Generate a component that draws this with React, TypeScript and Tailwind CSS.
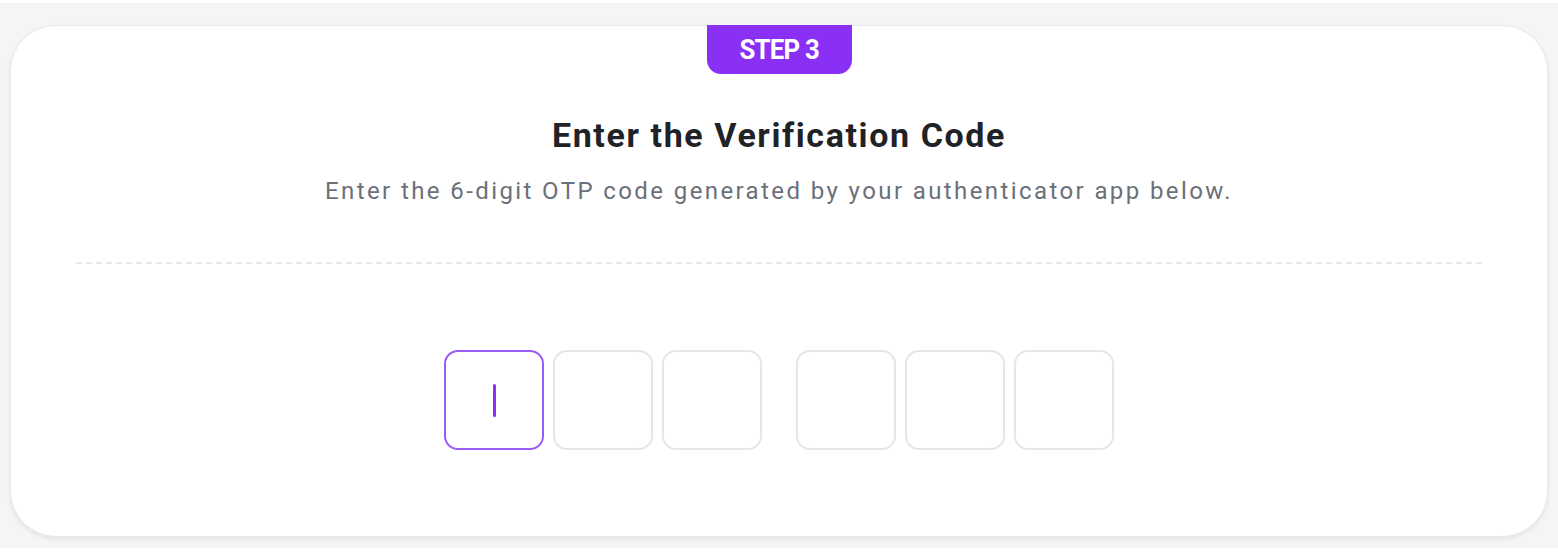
import React from "react";

export default function App() {
  const box = "w-[100px] h-[100px] rounded-[14px] border-2 border-[#e6e6e8] bg-white";
  return (
    <div className="w-[1558px] h-[556px] bg-white pt-[3px]" style={{ fontFamily: "Roboto, 'Liberation Sans', sans-serif" }}>
      <div className="h-[545px] bg-[#f4f5f7] pt-[22px] px-[10px]">
        <div className="h-[512px] rounded-[46px] bg-white border border-[#e9eaec] shadow-[0_2px_4px_rgba(0,0,0,0.08)] flex flex-col items-center">
          <div className="w-[145px] h-[49px] -mt-px bg-[#8a2ff4] rounded-b-[14px] flex items-center justify-center">
            <span className="text-white text-[28px] font-bold tracking-[-0.8px] leading-none scale-x-[0.92]">STEP 3</span>
          </div>
          <h1 className="mt-[41px] text-[34px] leading-[40px] font-bold tracking-[1.6px] text-[#1f2326]">Enter the Verification Code</h1>
          <p className="mt-[21px] text-[24px] leading-[30px] tracking-[2.4px] text-[#6b7079]">Enter the 6-digit OTP code generated by your authenticator app below.</p>
          <div className="w-full px-[65px] mt-[56px]">
            <div className="border-t-2 border-dashed border-[#e8e8ea]" />
          </div>
          <div className="mt-[86px] flex items-center">
            <div className="flex gap-[9px]">
              <div className="w-[100px] h-[100px] rounded-[14px] border-2 border-[#9b5cf6] bg-white flex items-center justify-center">
                <div className="w-[3px] h-[33px] rounded-full bg-[#8a2ff4]" />
              </div>
              <div className={box} />
              <div className={box} />
            </div>
            <div className="w-[34px]" />
            <div className="flex gap-[9px]">
              <div className={box} />
              <div className={box} />
              <div className={box} />
            </div>
          </div>
        </div>
      </div>
    </div>
  );
}
